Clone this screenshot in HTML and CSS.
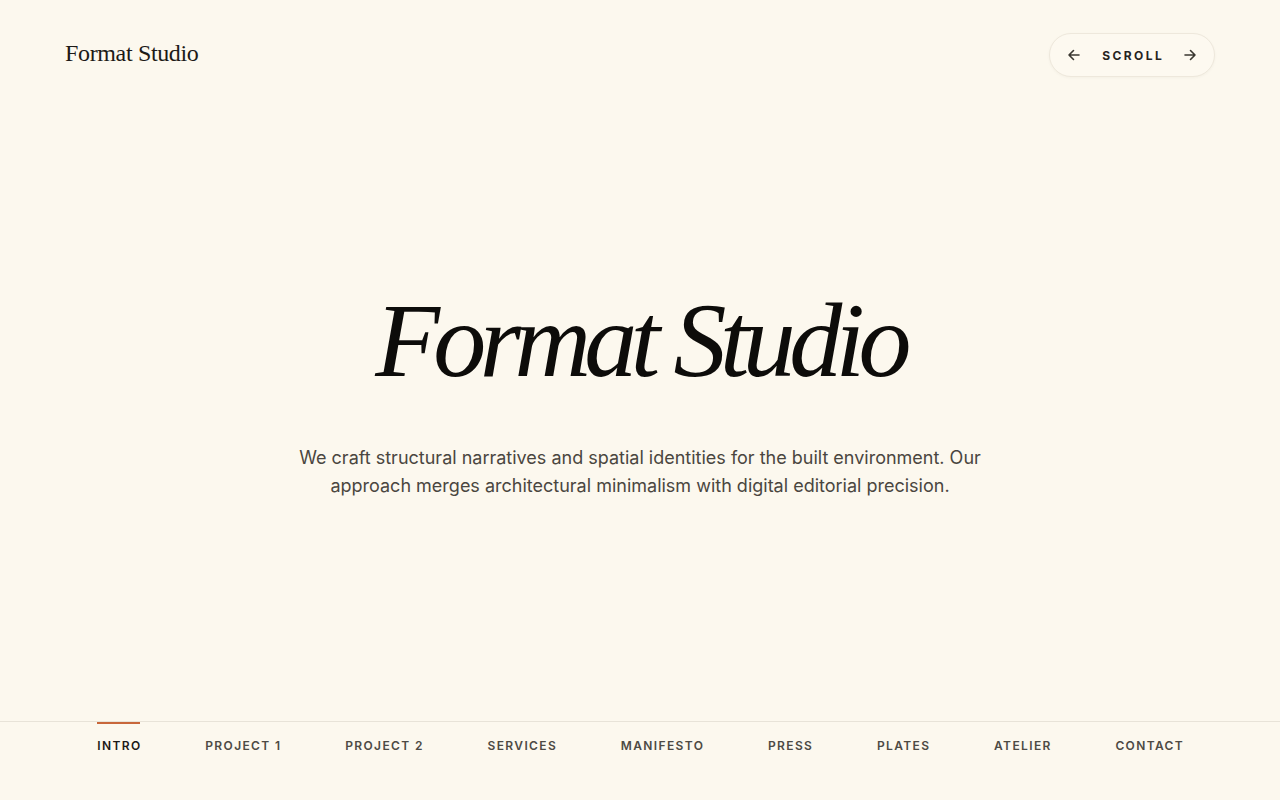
FILE: index.html
```html
<!DOCTYPE html>
<html lang="en">
<head>
<meta charset="utf-8">
<title>Format Studio</title>
<link rel="stylesheet" href="styles.css">
</head>
<body>
<div class="page">
  <header class="top">
    <div class="logo">Format Studio</div>
    <div class="scroll-pill">
      <svg class="arrow" width="16" height="16" viewBox="0 0 16 16" fill="none" stroke="currentColor" stroke-width="1.6" stroke-linecap="round" stroke-linejoin="round"><path d="M13 8H3M7.5 3.5L3 8l4.5 4.5"/></svg>
      <span class="scroll-label">SCROLL</span>
      <svg class="arrow" width="16" height="16" viewBox="0 0 16 16" fill="none" stroke="currentColor" stroke-width="1.6" stroke-linecap="round" stroke-linejoin="round"><path d="M3 8h10M8.5 3.5L13 8l-4.5 4.5"/></svg>
    </div>
  </header>
  <main class="hero">
    <h1 class="title">Format Studio</h1>
    <p class="lead">We craft structural narratives and spatial identities for the built environment. Our approach merges architectural minimalism with digital editorial precision.</p>
  </main>
  <nav class="bottom-nav">
    <a class="nav-item active">INTRO</a>
    <a class="nav-item">PROJECT 1</a>
    <a class="nav-item">PROJECT 2</a>
    <a class="nav-item">SERVICES</a>
    <a class="nav-item">MANIFESTO</a>
    <a class="nav-item">PRESS</a>
    <a class="nav-item">PLATES</a>
    <a class="nav-item">ATELIER</a>
    <a class="nav-item">CONTACT</a>
  </nav>
</div>
</body>
</html>
```
FILE: styles.css
```css
* { box-sizing: border-box; }
html, body { margin: 0; padding: 0; }
body {
  background: #fcf8ee;
  color: #111;
  font-family: Inter, "Liberation Sans", sans-serif;
}
.page {
  height: 800px;
  display: flex;
  flex-direction: column;
}
.top {
  display: flex;
  justify-content: space-between;
  align-items: center;
  padding: 33px 65px 0 65px;
}
.logo {
  font-family: "Liberation Serif", serif;
  font-size: 24px;
  color: #1c1a17;
  letter-spacing: -0.35px;
  padding-bottom: 4px;
}
.scroll-pill {
  display: flex;
  align-items: center;
  height: 44px;
  width: 166px;
  padding: 0 16px;
  justify-content: space-between;
  border: 1px solid #eee8dc;
  border-radius: 22px;
  background: #fdf9f0;
  box-shadow: 0 1px 3px rgba(60,40,10,0.04);
  color: #3a3731;
}
.scroll-label {
  font-size: 12px;
  font-weight: 700;
  letter-spacing: 0.2em;
  color: #26231f;
  margin-right: -0.2em;
}
.hero {
  flex: 1;
  display: flex;
  flex-direction: column;
  align-items: center;
  padding-top: 211px;
}
.title {
  margin: 0;
  font-family: "Liberation Serif", serif;
  font-style: italic;
  font-weight: 400;
  font-size: 106px;
  line-height: 1;
  letter-spacing: -6.6px;
  color: #0d0c0a;
}
.lead {
  margin: 50px 0 0 0;
  max-width: 700px;
  text-align: center;
  font-size: 18px;
  line-height: 28px;
  color: #4a463f;
}
.bottom-nav {
  height: 79px;
  border-top: 1px solid #e8e3d8;
  display: flex;
  justify-content: center;
  align-items: flex-start;
  gap: 65px;
}
.nav-item {
  position: relative;
  padding-top: 16px;
  font-size: 12px;
  font-weight: 600;
  letter-spacing: 0.115em;
  color: #4d4a44;
  margin-right: -0.115em;
}
.nav-item.active { color: #1c1a17; }
.nav-item.active::before {
  content: "";
  position: absolute;
  left: 0;
  right: 0.115em;
  top: 0;
  height: 2px;
  background: #c8673a;
}
```
